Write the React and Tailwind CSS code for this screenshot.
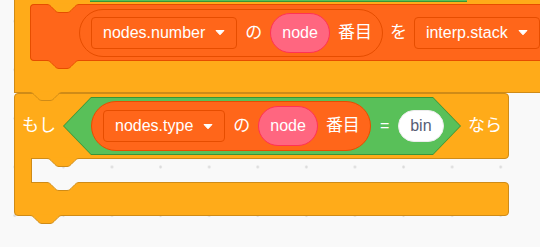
const font = "font-['Liberation_Sans','Noto_Sans_CJK_JP',sans-serif]";
const dots =
  "bg-[#f9f9f9] bg-[radial-gradient(circle,#dcdcdc_1px,transparent_1.6px)] bg-[length:48.6px_48.6px] bg-[position:-9.5px_-3.1px]";

// notch / tab drawn over a block edge
const Tab = ({ className, fill, stroke }) => (
  <svg
    width="34"
    height="11"
    viewBox="-1 -1.5 34 11"
    className={`absolute z-10 ${className}`}
  >
    <path
      d="M0 -1V0c2 0 3 1 4 2l4 4c1 1 2 2 4 2h8c2 0 3-1 4-2l4-4c1-1 2-2 4-2v-1z"
      fill={fill}
    />
    <path
      d="M0 0c2 0 3 1 4 2l4 4c1 1 2 2 4 2h8c2 0 3-1 4-2l4-4c1-1 2-2 4-2"
      fill="none"
      stroke={stroke}
    />
  </svg>
);

const Arrow = () => (
  <svg width="10" height="7" viewBox="0 0 10 7" className="shrink-0">
    <path
      d="M1 1.5h8L5 5.8z"
      fill="#fff"
      stroke="#fff"
      strokeWidth="1"
      strokeLinejoin="round"
    />
  </svg>
);

const Dropdown = ({ label }) => (
  <div className="flex h-[32px] shrink-0 items-center gap-[10px] rounded-[4px] border border-[#E64D00] bg-[#FF661A] px-[11px]">
    <span className="whitespace-nowrap leading-[20px]">{label}</span>
    <Arrow />
  </div>
);

const Pill = ({ label }) => (
  <div className="flex h-[40px] shrink-0 items-center rounded-full border border-[#FF3355] bg-[#FF6680] px-[11px]">
    <span className="leading-[20px]">{label}</span>
  </div>
);

const Word = ({ children }) => (
  <span className="shrink-0 whitespace-nowrap text-[17px] leading-[20px]">
    {children}
  </span>
);

const ItemOf = ({ list, tall }) => (
  <div
    className={`flex shrink-0 items-center gap-[8px] rounded-full border border-[#E64D00] bg-[#FF661A] pl-[11px] pr-[10px] ${
      tall ? "h-[50px]" : "h-[48px]"
    }`}
  >
    <Dropdown label={list} />
    <Word>の</Word>
    <Pill label="node" />
    <Word>番目</Word>
  </div>
);

export default function App() {
  return (
    <div
      className={`relative h-[247px] w-[540px] overflow-hidden text-[16px] text-white ${font} ${dots}`}
    >
      <div className="pl-[14px]">
        {/* upper block, cut off at the top */}
        <div className="relative h-[93px] w-[560px] border-b border-l border-[#CF8B17] bg-[#FFAB19] pl-[15px] pt-[4px]">
          <div className="absolute left-[75px] top-0 h-[2px] w-[377px] border-b border-[#389438] bg-[#59C059]" />

          <div className="flex h-[57px] items-center gap-[7px] rounded-l-[4px] border border-r-0 border-[#E64D00] bg-[#FF661A] pl-[48px]">
            <ItemOf list="nodes.number" />
            <Word>を</Word>
            <Dropdown label="interp.stack" />
          </div>

          <Tab className="left-[31px] top-[3px]" fill="#FFAB19" stroke="#E64D00" />
          <Tab className="left-[31px] top-[59px]" fill="#FF661A" stroke="#E64D00" />
          <Tab className="left-[14px] top-[91px]" fill="#FFAB19" stroke="#CF8B17" />
        </div>

        {/* if block */}
        <div className="relative w-[495px]">
          <div className="flex h-[66px] items-center rounded-t-[4px] rounded-br-[4px] border border-[#CF8B17] bg-[#FFAB19] pl-[7px]">
            <Word>もし</Word>
            <div className="ml-[7px] h-[58px] w-[398px] shrink-0 bg-[#389438] p-px [clip-path:polygon(28px_0,calc(100%_-_28px)_0,100%_50%,calc(100%_-_28px)_100%,28px_100%,0_50%)]">
              <div className="flex h-full items-center bg-[#59C059] pl-[27px] [clip-path:polygon(27px_0,calc(100%_-_27px)_0,100%_50%,calc(100%_-_27px)_100%,27px_100%,0_50%)]">
                <ItemOf list="nodes.type" tall />
                <span className="ml-[9px] leading-[20px]">=</span>
                <div className="ml-[9px] flex h-[32px] items-center rounded-full border border-[#ececec] bg-white px-[11px] text-[#575E75]">
                  <span className="leading-[20px]">bin</span>
                </div>
              </div>
            </div>
            <span className="ml-[7px] text-[17px] leading-[20px]">なら</span>
          </div>

          <div className="flex h-[23px]">
            <div className="relative z-[5] -my-px h-[25px] w-[17px] shrink-0 border-l border-[#CF8B17] bg-[#FFAB19]" />
            <div className="h-[23px] flex-1 border-l border-[#CF8B17]" />
          </div>

          <div className="h-[34px] rounded-b-[4px] rounded-tr-[4px] border border-[#CF8B17] bg-[#FFAB19]" />

          <Tab className="left-[32px] top-[64px]" fill="#FFAB19" stroke="#CF8B17" />
          <Tab className="left-[32px] top-[88px]" fill="#f9f9f9" stroke="#CF8B17" />
          <Tab className="left-[15px] top-[121px]" fill="#FFAB19" stroke="#CF8B17" />
        </div>
      </div>
    </div>
  );
}
